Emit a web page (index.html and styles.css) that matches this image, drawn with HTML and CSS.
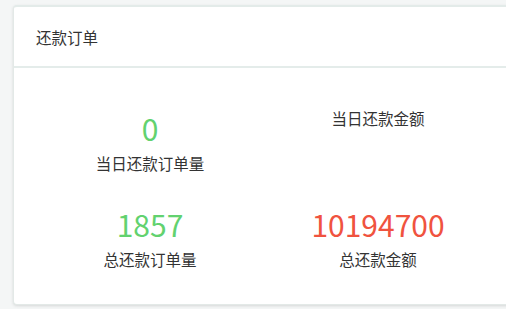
FILE: index.html
```html
<!DOCTYPE html>
<html lang="zh-CN">
<head>
  <meta charset="UTF-8" />
  <title>还款订单</title>
  <meta name="viewport" content="width=device-width, initial-scale=1" />
  <link rel="stylesheet" href="styles.css">
</head>
<body>

  <div class="ibox">
    <div class="ibox-title">
      <h5>还款订单</h5>
    </div>
    <div class="ibox-content">
      <div class="stat">
        <div class="stat-value green">0</div>
        <div class="stat-label">当日还款订单量</div>
      </div>
      <div class="stat">
        <div class="stat-value red"></div>
        <div class="stat-label">当日还款金额</div>
      </div>
      <div class="stat">
        <div class="stat-value green">1857</div>
        <div class="stat-label">总还款订单量</div>
      </div>
      <div class="stat">
        <div class="stat-value red">10194700</div>
        <div class="stat-label">总还款金额</div>
      </div>
    </div>
  </div>

</body>
</html>
```

FILE: styles.css
```css
/* Reset and base */
* {
  box-sizing: border-box;
  margin: 0;
  padding: 0;
}
html, body {
  height: 100%;
  overflow: hidden;
}
body {
  font-family: "Noto Sans CJK SC", "Noto Sans", sans-serif;
  background: #f4f6f6;
  color: #333;
  padding: 5px 0 0 13px;
}

/* Card */
.ibox {
  width: 502px;
  background: #fff;
  border: 1px solid #e3e9e7;
  border-top: 2px solid #e3ebe9;
  border-radius: 4px;
  box-shadow: 0 1px 3px rgb(0 0 0 / 0.12);
}
.ibox-title {
  height: 61px;
  display: flex;
  align-items: center;
  padding: 0 22px;
  border-bottom: 2px solid #e4ecea;
}
.ibox-title h5 {
  font-size: 15.5px;
  font-weight: 400;
  line-height: 22px;
}

/* Stats grid */
.ibox-content {
  display: grid;
  grid-template-columns: 228px 228px;
  row-gap: 29px;
  padding: 39px 22px 34px;
}
.stat {
  display: flex;
  flex-direction: column;
  align-items: center;
}
.stat-value {
  font-size: 30px;
  line-height: 43px;
  margin-bottom: 2px;
}
.stat-value:empty {
  margin-bottom: 0;
}
.stat-value.green {
  color: #62d26f;
}
.stat-value.red {
  color: #f0533f;
}
.stat-label {
  font-size: 15.5px;
  line-height: 22px;
  color: #333;
}
```
